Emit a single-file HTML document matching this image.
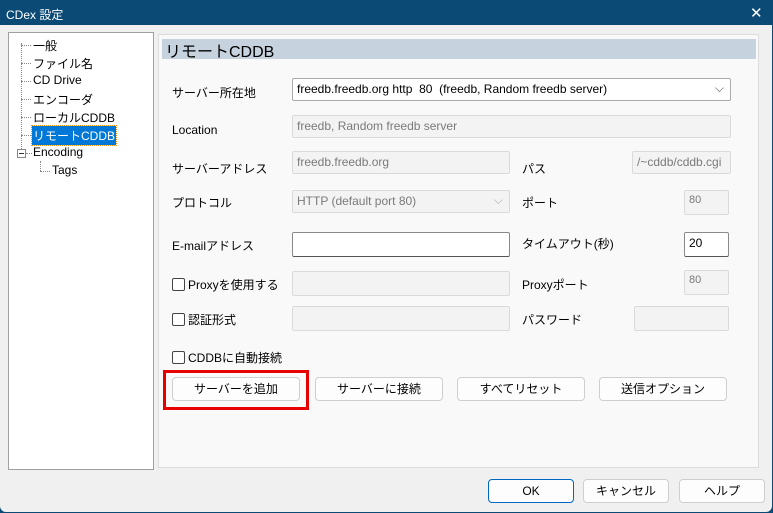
<!DOCTYPE html><html><head><meta charset="utf-8"><style>
body{margin:0;width:773px;height:513px;background:#0b4a75;overflow:hidden;font-family:"Liberation Sans","Noto Sans CJK JP",sans-serif;font-size:12px;color:#000}
#win{position:absolute;left:0;top:0;width:772px;height:512px;background:#f0f0f0;border-radius:0 0 6px 6px}
#title{position:absolute;left:0;top:0;width:772px;height:25px;background:#0b4a75;color:#fff;font-size:12px}
.a{position:absolute;white-space:nowrap}
.tree{position:absolute;left:8px;top:32px;width:144px;height:436px;background:#fff;border:1px solid #a0a0a0}
.panel{position:absolute;left:158px;top:34px;width:599px;height:432px;background:#f9f9f9;border:1px solid #dcdcdc}
.l{top:0}
.box{position:absolute;border:1px solid #dadada;background:#f3f3f3;color:#7a7a7a;box-sizing:border-box;padding:3px 4px;border-radius:2px}
.inp{position:absolute;border:1px solid #8a8a8a;border-bottom-color:#555;background:#fff;box-sizing:border-box;padding:3px 4px;border-radius:2px}
.btn{position:absolute;border:1px solid #cfcfcf;background:#fdfdfd;box-sizing:border-box;text-align:center;line-height:22px;border-radius:4px}
.cb{display:inline-block;width:11px;height:11px;border:1px solid #444;border-radius:2px;vertical-align:-2px;margin-right:3px;background:#fff}
.dot{position:absolute;border-top:1px dotted #888}
</style></head><body><div id="win">
<div id="title"><span class="a" style="left:6px;top:6px">CDex 設定</span><span class="a" style="left:750px;top:4px;font-size:15px">✕</span></div>
<div class="tree">
<div style="position:absolute;left:12px;top:10px;height:112px;border-left:1px dotted #888"></div>
<div class="dot" style="left:12px;top:12px;width:10px"></div><span class="a" style="left:24px;top:4px">一般</span>
<div class="dot" style="left:12px;top:30px;width:10px"></div><span class="a" style="left:24px;top:22px">ファイル名</span>
<div class="dot" style="left:12px;top:48px;width:10px"></div><span class="a" style="left:24px;top:40px">CD Drive</span>
<div class="dot" style="left:12px;top:66px;width:10px"></div><span class="a" style="left:24px;top:58px">エンコーダ</span>
<div class="dot" style="left:12px;top:84px;width:10px"></div><span class="a" style="left:24px;top:76px">ローカルCDDB</span>
<div class="dot" style="left:12px;top:102px;width:10px"></div><span class="a" style="left:23px;top:93px;background:#0078d7;color:#fff;padding:1px 1px;outline:1px dotted #f80">リモートCDDB</span>
<div style="position:absolute;left:8px;top:116px;width:7px;height:7px;border:1px solid #888;background:#fff"><div style="position:absolute;left:1px;top:3px;width:5px;height:1px;background:#333"></div></div>
<div class="dot" style="left:17px;top:120px;width:6px"></div><span class="a" style="left:24px;top:112px">Encoding</span>
<div style="position:absolute;left:31px;top:128px;height:10px;border-left:1px dotted #888"></div>
<div class="dot" style="left:31px;top:138px;width:10px"></div><span class="a" style="left:43px;top:130px">Tags</span>
</div>
<div class="panel">
<div style="position:absolute;left:3px;top:4px;width:594px;height:20px;background:#c6d2dd"></div>
<span class="a" style="left:6px;top:3px;font-size:16px">リモートCDDB</span>
<span class="a" style="left:13px;top:49px">サーバー所在地</span>
<div class="inp" style="left:133px;top:43px;width:439px;height:23px;border-color:#aaa">freedb.freedb.org http&nbsp; 80&nbsp; (freedb, Random freedb server)<span class="a" style="right:6px;top:2px;color:#555">⌵</span></div>
<span class="a" style="left:13px;top:88px">Location</span>
<div class="box" style="left:133px;top:80px;width:439px;height:23px">freedb, Random freedb server</div>
<span class="a" style="left:13px;top:125px">サーバーアドレス</span>
<div class="box" style="left:133px;top:116px;width:218px;height:23px">freedb.freedb.org</div>
<span class="a" style="left:363px;top:125px">パス</span>
<div class="box" style="left:473px;top:116px;width:99px;height:23px">/~cddb/cddb.cgi</div>
<span class="a" style="left:13px;top:159px">プロトコル</span>
<div class="box" style="left:133px;top:155px;width:218px;height:23px">HTTP (default port 80)<span class="a" style="right:6px;top:2px;color:#aaa">⌵</span></div>
<span class="a" style="left:363px;top:159px">ポート</span>
<div class="box" style="left:525px;top:155px;width:45px;height:25px;font-size:11px">80</div>
<span class="a" style="left:13px;top:202px">E-mailアドレス</span>
<div class="inp" style="left:133px;top:197px;width:218px;height:25px"></div>
<span class="a" style="left:363px;top:200px">タイムアウト(秒)</span>
<div class="inp" style="left:525px;top:197px;width:45px;height:25px">20</div>
<span class="a" style="left:13px;top:241px"><span class="cb"></span>Proxyを使用する</span>
<div class="box" style="left:133px;top:236px;width:218px;height:25px"></div>
<span class="a" style="left:363px;top:241px">Proxyポート</span>
<div class="box" style="left:525px;top:235px;width:45px;height:25px;font-size:11px">80</div>
<span class="a" style="left:13px;top:276px"><span class="cb"></span>認証形式</span>
<div class="box" style="left:133px;top:271px;width:218px;height:25px"></div>
<span class="a" style="left:363px;top:276px">パスワード</span>
<div class="box" style="left:475px;top:271px;width:95px;height:25px"></div>
<span class="a" style="left:13px;top:314px"><span class="cb"></span>CDDBに自動接続</span>
<div style="position:absolute;left:4px;top:335px;width:146px;height:40px;border:3px solid #e60000;box-sizing:border-box"></div>
<div class="btn" style="left:13px;top:342px;width:128px;height:24px">サーバーを追加</div>
<div class="btn" style="left:156px;top:342px;width:128px;height:24px">サーバーに接続</div>
<div class="btn" style="left:298px;top:342px;width:128px;height:24px">すべてリセット</div>
<div class="btn" style="left:440px;top:342px;width:128px;height:24px">送信オプション</div>
</div>
<div class="btn" style="left:488px;top:479px;width:86px;height:24px;border-color:#0067c0">OK</div>
<div class="btn" style="left:583px;top:479px;width:86px;height:24px">キャンセル</div>
<div class="btn" style="left:679px;top:479px;width:86px;height:24px">ヘルプ</div>
</div></body></html>
